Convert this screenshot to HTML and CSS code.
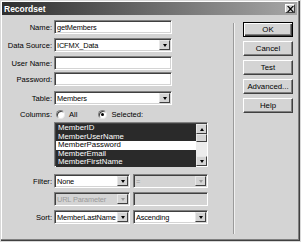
FILE: index.html
```html
<!DOCTYPE html>
<html>
<head>
<meta charset="utf-8">
<link rel="stylesheet" href="styles.css">
</head>
<body>
<div class="window">
  <div class="titlebar">
    <span class="title">Recordset</span>
    <span class="close">
      <svg width="7" height="6" viewBox="0 0 7 6"><path d="M0 0h1.5l2 2 2-2H7L4.3 3 7 6H5.5l-2-2-2 2H0l2.7-3z" fill="#000"/></svg>
    </span>
  </div>
  <div class="body">
    <div class="form">
      <div class="row r-name"><label>Name:</label><div class="field w-full"><span class="txt">getMembers</span></div></div>
      <div class="row r-ds"><label>Data Source:</label><div class="field select w-full"><span class="txt">ICFMX_Data</span><span class="arrow"><i></i></span></div></div>
      <div class="row r-un"><label>User Name:</label><div class="field w-full"></div></div>
      <div class="row r-pw"><label>Password:</label><div class="field w-full"></div></div>
      <div class="row r-tb"><label>Table:</label><div class="field select w-full"><span class="txt">Members</span><span class="arrow"><i></i></span></div></div>
      <div class="row r-col"><label>Columns:</label>
        <div class="radios">
          <span class="radio"></span><span class="rlabel">All</span>
          <span class="radio on"></span><span class="rlabel">Selected:</span>
        </div>
      </div>
      <div class="row r-list"><label></label>
        <div class="list">
          <div class="items">
            <div class="item sel">MemberID</div>
            <div class="item sel">MemberUserName</div>
            <div class="item">MemberPassword</div>
            <div class="item sel">MemberEmail</div>
            <div class="item sel">MemberFirstName</div>
          </div>
          <div class="scroll">
            <span class="sbtn"><i class="up"></i></span>
            <span class="thumb"></span>
            <span class="track"></span>
            <span class="sbtn"><i></i></span>
          </div>
        </div>
      </div>
      <div class="row r-filter"><label>Filter:</label>
        <div class="field select w-half"><span class="txt">None</span><span class="arrow"><i></i></span></div>
        <div class="field select w-small disabled"><span class="txt">=</span><span class="arrow"><i></i></span></div>
      </div>
      <div class="row r-url"><label></label>
        <div class="field select w-half disabled"><span class="txt">URL Parameter</span><span class="arrow"><i></i></span></div>
        <div class="field w-small disabled"></div>
      </div>
      <div class="row r-sort"><label>Sort:</label>
        <div class="field select w-half"><span class="txt">MemberLastName</span><span class="arrow"><i></i></span></div>
        <div class="field select w-small"><span class="txt">Ascending</span><span class="arrow"><i></i></span></div>
      </div>
    </div>
    <div class="sep"></div>
    <div class="buttons">
      <button class="btn default">OK</button>
      <button class="btn">Cancel</button>
      <button class="btn">Test</button>
      <button class="btn">Advanced...</button>
      <button class="btn">Help</button>
    </div>
  </div>
</div>
</body>
</html>
```
FILE: styles.css
```css
* { box-sizing: border-box; }
html, body { margin: 0; padding: 0; background: #fff; }
body { font-family: "Liberation Sans", Arial, sans-serif; font-size: 7.6px; color: #000; }

.window {
  width: 301px;
  height: 242px;
  background: #d4d4d4;
  border: 1px solid #d8d8d8;
  box-shadow: inset -1px -1px 0 #404040, inset -2px -2px 0 #808080, inset 1px 1px 0 #fff;
  padding: 1px 3px 3px 1px;
  display: flex;
  flex-direction: column;
}

.titlebar {
  height: 13px;
  background: linear-gradient(to right, #2e2e2e, #a6a6a6);
  display: flex;
  align-items: center;
  justify-content: space-between;
  padding: 0 2px 0 2px;
}
.title { color: #fff; font-weight: bold; font-size: 8.5px; }
.close {
  width: 10px; height: 9px;
  background: #d4d4d4;
  border: 1px solid;
  border-color: #fff #404040 #404040 #fff;
  display: flex; align-items: center; justify-content: center;
}

.body { flex: 1; display: flex; }

.form { width: 229px; padding-top: 5px; }
.row { display: flex; align-items: center; }
.row label { width: 52px; text-align: right; padding-right: 2px; flex: none; }
.r-ds { margin-top: 4px; }
.r-un { margin-top: 4px; }
.r-pw { margin-top: 2px; }
.r-tb { margin-top: 5px; }
.r-col { margin-top: 5px; height: 9px; }
.r-list { margin-top: 3px; }
.r-filter { margin-top: 7px; }
.r-url { margin-top: 4px; }
.r-sort { margin-top: 4px; }

.field {
  height: 14px;
  background: #fff;
  border: 1px solid;
  border-color: #808080 #fff #fff #808080;
  box-shadow: inset 1px 1px 0 #404040, inset -1px -1px 0 #d4d4d4;
  display: flex;
  align-items: center;
  padding: 0 1px 0 2px;
}
.w-full { width: 118px; }
.w-half { width: 76px; margin-right: 3px; }
.w-small { width: 75px; }
.txt { flex: 1; white-space: nowrap; overflow: hidden; font-size: 7.4px; letter-spacing: -0.15px; }
.field.disabled { background: #d4d4d4; color: #9a9a9a; }

.arrow {
  width: 11px; height: 10px;
  background: #d4d4d4;
  border: 1px solid;
  border-color: #e8e8e8 #404040 #404040 #e8e8e8;
  display: flex; align-items: center; justify-content: center;
  flex: none;
}
.arrow i, .sbtn i {
  width: 0; height: 0;
  border-left: 2.5px solid transparent;
  border-right: 2.5px solid transparent;
  border-top: 3px solid #000;
}
.sbtn i.up { border-top: 0; border-bottom: 3px solid #000; }
.disabled .arrow i { border-top-color: #9a9a9a; }

.radios { display: flex; align-items: center; }
.radio {
  width: 9px; height: 9px; border-radius: 50%;
  background: #fff;
  border: 1px solid;
  border-color: #808080 #e8e8e8 #e8e8e8 #808080;
  box-shadow: inset 1px 1px 0 #404040;
  margin-left: 2px;
  display: flex; align-items: center; justify-content: center;
}
.radio.on::after { content: ""; width: 3px; height: 3px; border-radius: 50%; background: #000; }
.rlabel { margin-left: 4px; margin-right: 19px; }

.list {
  width: 154px; height: 45px;
  border: 1px solid;
  border-color: #808080 #fff #fff #808080;
  box-shadow: inset 1px 1px 0 #404040;
  background: #fff;
  display: flex;
  padding: 1px 0 0 1px;
}
.items { flex: 1; }
.item { height: 8.6px; line-height: 8.6px; padding-left: 2px; white-space: nowrap; color: #000; font-size: 7.8px; }
.item.sel { background: #2a2a2a; color: #fff; }
.scroll { width: 11px; display: flex; flex-direction: column; background: #ececec; }
.sbtn, .thumb {
  height: 10px;
  background: #d4d4d4;
  border: 1px solid;
  border-color: #e8e8e8 #404040 #404040 #e8e8e8;
  display: flex; align-items: center; justify-content: center;
}
.thumb { height: 8px; }
.track { flex: 1; }

.sep {
  width: 2px;
  margin: 8px 0 4px 2px;
  border-left: 1px solid #9a9a9a;
  border-right: 1px solid #f0f0f0;
}

.buttons {
  display: flex;
  flex-direction: column;
  padding: 7px 0 0 8px;
  gap: 4px;
}
.btn {
  width: 50px; height: 15px;
  font: inherit;
  font-size: 7.8px;
  background: #d4d4d4;
  border: 1px solid;
  border-color: #fff #404040 #404040 #fff;
  box-shadow: inset -1px -1px 0 #808080;
  padding: 0;
  color: #000;
}
.btn.default {
  border-color: #000;
  box-shadow: inset 1px 1px 0 #fff, inset -1px -1px 0 #404040, inset -2px -2px 0 #808080;
}
```
